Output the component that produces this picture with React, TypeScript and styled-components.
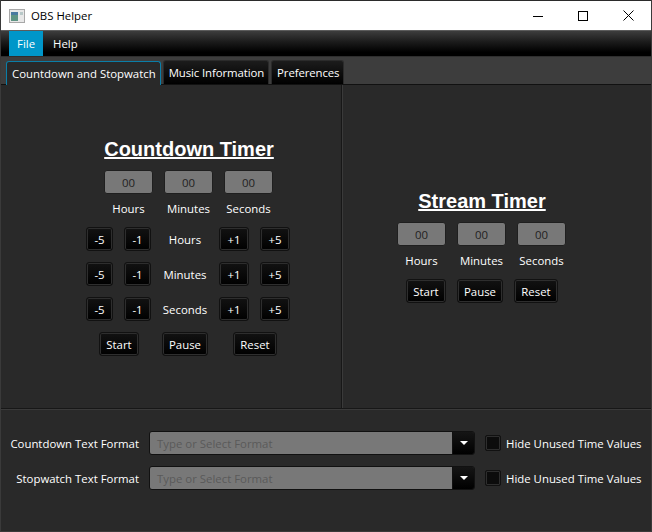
import styled, { createGlobalStyle } from "styled-components";

const GlobalStyle = createGlobalStyle`
  html, body {
    margin: 0;
    padding: 0;
    background: #292929;
  }
`;

const Window = styled.div`
  width: 652px;
  height: 532px;
  box-sizing: border-box;
  display: flex;
  flex-direction: column;
  background: #292929;
  border-left: 1px solid #3a3a3a;
  border-right: 1px solid #3a3a3a;
  border-bottom: 1px solid #3a3a3a;
  font-family: "Open Sans", "Noto Sans", sans-serif;
  font-size: 11.4px;
  color: #fff;
  overflow: hidden;
`;

const TitleBar = styled.div`
  height: 31px;
  flex: none;
  box-sizing: border-box;
  display: flex;
  align-items: center;
  background: #fff;
  border-top: 1px solid #2b2b2b;
  border-bottom: 1px solid #5c5c5c;
  color: #000;
  padding-left: 8px;
`;

const AppIcon = styled.svg`
  width: 16px;
  height: 16px;
  flex: none;
`;

const WindowTitle = styled.span`
  margin-left: 6px;
  flex: 1;
`;

const CaptionButton = styled.div<{ $wide?: boolean }>`
  width: ${(p) => (p.$wide ? 46 : 45)}px;
  height: 29px;
  display: flex;
  align-items: center;
  justify-content: center;
`;

const MenuBar = styled.div`
  height: 25px;
  flex: none;
  display: flex;
  gap: 2px;
  padding-left: 8px;
  background: linear-gradient(#3d3d3d 0%, #1a1a1a 45%, #000 85%, #000 100%);
`;

const MenuItem = styled.div<{ $active?: boolean }>`
  display: flex;
  align-items: center;
  padding: 0 8px;
  background: ${(p) => (p.$active ? "#0096c9" : "transparent")};
`;

const TabStrip = styled.div`
  height: 29px;
  flex: none;
  box-sizing: border-box;
  display: flex;
  align-items: flex-end;
  gap: 2px;
  padding-left: 5px;
  background: #3d3d3d;
  border-top: 1px solid #2e2e2e;
  border-bottom: 1px solid #111;
`;

const Tab = styled.div<{ $active?: boolean }>`
  height: 24px;
  box-sizing: border-box;
  display: flex;
  align-items: center;
  padding: 0 4px 0 5px;
  border-radius: 3px 3px 0 0;
  white-space: nowrap;
  letter-spacing: ${(p) => (p.$active ? 0 : -0.1)}px;
  border: 1px solid ${(p) => (p.$active ? "#0a7ea8" : "#2b2b2b")};
  border-bottom: none;
  margin-bottom: ${(p) => (p.$active ? -1 : 0)}px;
  background: ${(p) =>
    p.$active ? "#292929" : "linear-gradient(#1c1c1c, #000)"};
`;

const TimerArea = styled.div`
  height: 323px;
  flex: none;
  display: flex;
  border-bottom: 1px solid #171717;
  box-shadow: 0 1px 0 #3a3a3a;
`;

const LeftPane = styled.section`
  width: 341px;
  flex: none;
  box-sizing: border-box;
  padding: 53px 0 0 85px;
  border-right: 1px solid #171717;
  box-shadow: 1px 0 0 #3a3a3a;
`;

const RightPane = styled.section`
  flex: 1;
  padding: 105px 0 0 55px;
`;

const Heading = styled.h1<{ $left: number; $width: number }>`
  margin: 0 0 9px ${(p) => p.$left}px;
  width: ${(p) => p.$width}px;
  height: 23px;
  font-family: "Liberation Sans", Arial, sans-serif;
  font-size: 20px;
  line-height: 23px;
  font-weight: 700;
  text-align: center;
  white-space: nowrap;
  text-decoration: underline;
  text-decoration-thickness: 2px;
`;

const FieldGrid = styled.div<{ $left: number }>`
  display: grid;
  grid-template-columns: repeat(3, 49px);
  column-gap: 11px;
  row-gap: 6px;
  margin-left: ${(p) => p.$left}px;
  justify-items: center;
`;

const TimeField = styled.div`
  width: 49px;
  height: 24px;
  box-sizing: border-box;
  display: flex;
  align-items: center;
  justify-content: center;
  background: #787878;
  border: 1px solid #1f1f1f;
  border-radius: 3px;
  color: #222;
`;

const FieldLabel = styled.div`
  height: 17px;
  line-height: 17px;
  white-space: nowrap;
`;

const AdjustRows = styled.div`
  margin-top: 10px;
  display: flex;
  flex-direction: column;
  gap: 11px;
`;

const AdjustRow = styled.div`
  display: grid;
  grid-template-columns: 38px 27px 68px 41px 30px;
  height: 24px;
  align-items: center;
`;

const RowLabel = styled.div`
  text-align: center;
  white-space: nowrap;
`;

const Button = styled.button<{ $width: number }>`
  width: ${(p) => p.$width}px;
  height: 24px;
  box-sizing: border-box;
  padding: 0;
  display: flex;
  align-items: center;
  justify-content: center;
  font: inherit;
  color: #fff;
  background: linear-gradient(#121212, #000);
  border: 1px solid #111;
  box-shadow: inset 0 0 0 1px #2e2e2e;
  border-radius: 3px;
`;

const ActionRow = styled.div<{ $left: number; $top: number; $columns: string }>`
  display: grid;
  grid-template-columns: ${(p) => p.$columns};
  margin: ${(p) => p.$top}px 0 0 ${(p) => p.$left}px;
`;

const FormatArea = styled.div`
  flex: 1;
  display: flex;
  flex-direction: column;
  gap: 11px;
  padding-top: 22px;
`;

const FormatRow = styled.div`
  display: flex;
  align-items: center;
  height: 24px;
`;

const FormatLabel = styled.div`
  width: 138px;
  flex: none;
  text-align: right;
  white-space: nowrap;
`;

const Combo = styled.div`
  width: 326px;
  height: 24px;
  margin-left: 10px;
  box-sizing: border-box;
  flex: none;
  display: flex;
  border: 1px solid #111;
  border-radius: 3px;
  overflow: hidden;
`;

const ComboInput = styled.div`
  flex: 1;
  display: flex;
  align-items: center;
  padding-left: 7px;
  background: #787878;
  color: #5a5a5a;
`;

const ComboArrow = styled.div`
  width: 22px;
  flex: none;
  box-sizing: border-box;
  display: flex;
  align-items: center;
  justify-content: center;
  border-left: 1px solid #111;
  background: linear-gradient(#151515, #000);
`;

const Caret = styled.div`
  width: 0;
  height: 0;
  border-left: 4px solid transparent;
  border-right: 4px solid transparent;
  border-top: 4px solid #fff;
`;

const CheckBox = styled.div`
  width: 16px;
  height: 16px;
  box-sizing: border-box;
  flex: none;
  margin-left: 10px;
  background: #0c0c0c;
  border: 1px solid #111;
  box-shadow: inset 0 0 0 1px #2e2e2e;
  border-radius: 2px;
`;

const CheckLabel = styled.div`
  margin-left: 5px;
  white-space: nowrap;
`;

const UNITS = ["Hours", "Minutes", "Seconds"];

const Fields = ({ left }: { left: number }) => (
  <FieldGrid $left={left}>
    {UNITS.map((u) => (
      <TimeField key={u}>00</TimeField>
    ))}
    {UNITS.map((u) => (
      <FieldLabel key={u}>{u}</FieldLabel>
    ))}
  </FieldGrid>
);

const FormatLine = ({ label }: { label: string }) => (
  <FormatRow>
    <FormatLabel>{label}</FormatLabel>
    <Combo>
      <ComboInput>Type or Select Format</ComboInput>
      <ComboArrow>
        <Caret />
      </ComboArrow>
    </Combo>
    <CheckBox />
    <CheckLabel>Hide Unused Time Values</CheckLabel>
  </FormatRow>
);

export default function App() {
  return (
    <>
      <GlobalStyle />
      <Window>
        <TitleBar>
          <AppIcon viewBox="0 0 16 16">
            <rect x="0.5" y="1.5" width="15" height="13" fill="#e8e8e8" stroke="#a8a8a8" />
            <rect x="2" y="4" width="7" height="9" fill="#5f9484" />
            <rect x="2" y="4" width="7" height="3" fill="#4a7aa0" />
            <rect x="11" y="4" width="3" height="3" fill="#b8c8c8" />
          </AppIcon>
          <WindowTitle>OBS Helper</WindowTitle>
          <CaptionButton>
            <svg width="10" height="10" viewBox="0 0 10 10">
              <path d="M0 5.5H10" stroke="#000" />
            </svg>
          </CaptionButton>
          <CaptionButton>
            <svg width="10" height="10" viewBox="0 0 10 10">
              <rect x="0.5" y="0.5" width="9" height="9" fill="none" stroke="#000" />
            </svg>
          </CaptionButton>
          <CaptionButton $wide>
            <svg width="11" height="11" viewBox="0 0 11 11">
              <path d="M0.5 0.5L10.5 10.5M10.5 0.5L0.5 10.5" stroke="#000" />
            </svg>
          </CaptionButton>
        </TitleBar>
        <MenuBar>
          <MenuItem $active>File</MenuItem>
          <MenuItem>Help</MenuItem>
        </MenuBar>
        <TabStrip>
          <Tab $active>Countdown and Stopwatch</Tab>
          <Tab>Music Information</Tab>
          <Tab>Preferences</Tab>
        </TabStrip>
        <TimerArea>
          <LeftPane>
            <Heading $left={18} $width={170}>
              Countdown Timer
            </Heading>
            <Fields left={18} />
            <AdjustRows>
              {UNITS.map((u) => (
                <AdjustRow key={u}>
                  <Button $width={27}>-5</Button>
                  <Button $width={27}>-1</Button>
                  <RowLabel>{u}</RowLabel>
                  <Button $width={30}>+1</Button>
                  <Button $width={30}>+5</Button>
                </AdjustRow>
              ))}
            </AdjustRows>
            <ActionRow $left={13} $top={11} $columns="63px 71px 44px">
              <Button $width={40}>Start</Button>
              <Button $width={46}>Pause</Button>
              <Button $width={44}>Reset</Button>
            </ActionRow>
          </LeftPane>
          <RightPane>
            <Heading $left={21} $width={128}>
              Stream Timer
            </Heading>
            <Fields left={0} />
            <ActionRow $left={9} $top={10} $columns="51px 57px 44px">
              <Button $width={40}>Start</Button>
              <Button $width={46}>Pause</Button>
              <Button $width={44}>Reset</Button>
            </ActionRow>
          </RightPane>
        </TimerArea>
        <FormatArea>
          <FormatLine label="Countdown Text Format" />
          <FormatLine label="Stopwatch Text Format" />
        </FormatArea>
      </Window>
    </>
  );
}
